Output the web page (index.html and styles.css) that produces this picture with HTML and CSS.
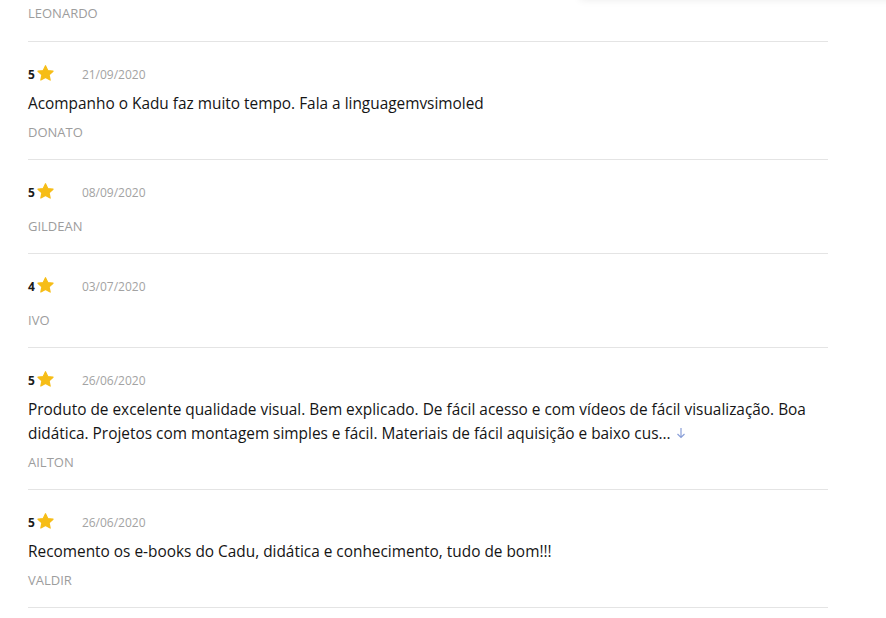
FILE: index.html
```html
<!DOCTYPE html>
<html lang="pt-BR">
<head>
  <meta charset="UTF-8">
  <title>Avaliações</title>
  <link rel="stylesheet" href="styles.css">
</head>
<body>
  <div class="page">
    <div class="floating"></div>
    <div class="reviews">
      <div class="review first">
        <div class="name">Leonardo</div>
      </div>
      <div class="review">
        <div class="meta">
          <span class="rate">5</span>
          <svg class="star" viewBox="0 0 24 24"><path d="M12 2.2l2.9 6.1 6.6.8-4.9 4.6 1.3 6.6L12 17l-5.9 3.3 1.3-6.6-4.9-4.6 6.6-.8z"/></svg>
          <span class="date">21/09/2020</span>
        </div>
        <p class="text">Acompanho o Kadu faz muito tempo. Fala a linguagemvsimoled</p>
        <div class="name">Donato</div>
      </div>
      <div class="review">
        <div class="meta">
          <span class="rate">5</span>
          <svg class="star" viewBox="0 0 24 24"><path d="M12 2.2l2.9 6.1 6.6.8-4.9 4.6 1.3 6.6L12 17l-5.9 3.3 1.3-6.6-4.9-4.6 6.6-.8z"/></svg>
          <span class="date">08/09/2020</span>
        </div>
        <p class="text"></p>
        <div class="name">Gildean</div>
      </div>
      <div class="review">
        <div class="meta">
          <span class="rate">4</span>
          <svg class="star" viewBox="0 0 24 24"><path d="M12 2.2l2.9 6.1 6.6.8-4.9 4.6 1.3 6.6L12 17l-5.9 3.3 1.3-6.6-4.9-4.6 6.6-.8z"/></svg>
          <span class="date">03/07/2020</span>
        </div>
        <p class="text"></p>
        <div class="name">Ivo</div>
      </div>
      <div class="review">
        <div class="meta">
          <span class="rate">5</span>
          <svg class="star" viewBox="0 0 24 24"><path d="M12 2.2l2.9 6.1 6.6.8-4.9 4.6 1.3 6.6L12 17l-5.9 3.3 1.3-6.6-4.9-4.6 6.6-.8z"/></svg>
          <span class="date">26/06/2020</span>
        </div>
        <p class="text">Produto de excelente qualidade visual. Bem explicado. De fácil acesso e com vídeos de fácil visualização. Boa<br>didática. Projetos com montagem simples e fácil. Materiais de fácil aquisição e baixo cus...<span class="more"><svg viewBox="0 0 10 12"><path d="M5 1v9.5M1.5 7l3.5 3.5L8.5 7"/></svg></span></p>
        <div class="name">Ailton</div>
      </div>
      <div class="review">
        <div class="meta">
          <span class="rate">5</span>
          <svg class="star" viewBox="0 0 24 24"><path d="M12 2.2l2.9 6.1 6.6.8-4.9 4.6 1.3 6.6L12 17l-5.9 3.3 1.3-6.6-4.9-4.6 6.6-.8z"/></svg>
          <span class="date">26/06/2020</span>
        </div>
        <p class="text">Recomento os e-books do Cadu, didática e conhecimento, tudo de bom!!!</p>
        <div class="name">Valdir</div>
      </div>
    </div>
  </div>
</body>
</html>
```

FILE: styles.css
```css
* {
  margin: 0;
  padding: 0;
  box-sizing: border-box;
  font-family: "Open Sans", sans-serif;
}
html,
body {
  width: 100%;
  height: 100%;
  background-color: #ffffff;
  overflow: hidden;
}

.page {
  position: relative;
  padding-left: 28px;
}

.floating {
  position: absolute;
  top: -40px;
  left: 580px;
  width: 340px;
  height: 40px;
  background-color: #ffffff;
  box-shadow: 0 0 8px rgba(0, 0, 0, 0.08);
}

.reviews {
  width: 800px;
}

.review {
  display: flex;
  flex-direction: column;
  padding: 22px 0 18px;
  border-bottom: 1px solid #e4e4e4;
}
.review.first {
  padding: 4px 0 19px;
}

.review .meta {
  display: flex;
  align-items: center;
  height: 20px;
  margin-bottom: 8px;
}
.review .meta .rate {
  font-size: 12px;
  font-weight: 700;
  color: #1b1b1b;
  margin-right: 1px;
}
.review .meta .star {
  width: 19px;
  height: 19px;
  fill: #f6bd17;
  stroke: #f6bd17;
  stroke-width: 1.5;
  stroke-linejoin: round;
  margin-bottom: 2px;
}
.review .meta .date {
  font-size: 12px;
  color: #a3a3a3;
  margin-left: 27px;
}

.review .text {
  font-size: 15.4px;
  line-height: 24px;
  color: #151515;
  margin-bottom: 7px;
}
.review .text .more svg {
  width: 10px;
  height: 12px;
  margin-left: 5px;
  fill: none;
  stroke: #8a9fd8;
  stroke-width: 1.2;
}

.review .name {
  font-size: 13px;
  line-height: 18px;
  text-transform: uppercase;
  color: #9d9d9d;
}
```
